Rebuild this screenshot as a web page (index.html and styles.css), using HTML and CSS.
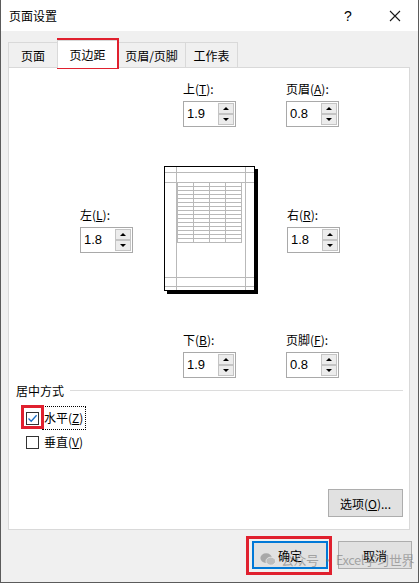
FILE: index.html
```html
<!DOCTYPE html>
<html>
<head>
  <title>页面设置</title>
  <meta charset="UTF-8">
  <link rel="stylesheet" href="styles.css">
</head>
<body>
  <div class="dialog">
    <div class="titlebar">
      <span class="title">页面设置</span>
      <span class="help">?</span>
      <span class="close">
        <svg width="12" height="12" viewBox="0 0 12 12"><path d="M1 1L11 11M11 1L1 11" stroke="#1a1a1a" stroke-width="1.1"/></svg>
      </span>
    </div>

    <div class="body">
      <div class="tabs">
        <div class="tab">页面</div>
        <div class="tab active">页边距</div>
        <div class="tab">页眉/页脚</div>
        <div class="tab">工作表</div>
      </div>

      <div class="panel">
        <div class="margins">
          <div class="field top">
            <label>上(<u>T</u>):</label>
            <div class="spin"><span class="val">1.9</span><div class="arrows"><span class="up"></span><span class="down"></span></div></div>
          </div>
          <div class="field header">
            <label>页眉(<u>A</u>):</label>
            <div class="spin"><span class="val">0.8</span><div class="arrows"><span class="up"></span><span class="down"></span></div></div>
          </div>

          <div class="field left">
            <label>左(<u>L</u>):</label>
            <div class="spin"><span class="val">1.8</span><div class="arrows"><span class="up"></span><span class="down"></span></div></div>
          </div>
          <div class="preview">
            <svg width="94" height="128" viewBox="0 0 94 128">
              <rect x="3" y="3" width="91" height="125" fill="#000"/>
              <rect x="0.5" y="0.5" width="90" height="124" fill="#fff" stroke="#000"/>
              <g stroke="#b9b9b9" stroke-width="1" fill="none">
                <path d="M12.5 1V124M81.5 1V124M1 6.5H90M1 16.5H90M1 111.5H90M1 120.5H90"/>
                <rect x="13.5" y="16.5" width="64" height="60"/>
                <path d="M29.5 16V77M45.5 16V77M61.5 16V77"/>
                <path d="M13 20.5H78M13 24.5H78M13 28.5H78M13 32.5H78M13 36.5H78M13 40.5H78M13 44.5H78M13 48.5H78M13 52.5H78M13 56.5H78M13 60.5H78M13 64.5H78M13 68.5H78M13 72.5H78"/>
              </g>
            </svg>
          </div>
          <div class="field right">
            <label>右(<u>R</u>):</label>
            <div class="spin"><span class="val">1.8</span><div class="arrows"><span class="up"></span><span class="down"></span></div></div>
          </div>

          <div class="field bottom">
            <label>下(<u>B</u>):</label>
            <div class="spin"><span class="val">1.9</span><div class="arrows"><span class="up"></span><span class="down"></span></div></div>
          </div>
          <div class="field footer-field">
            <label>页脚(<u>F</u>):</label>
            <div class="spin"><span class="val">0.8</span><div class="arrows"><span class="up"></span><span class="down"></span></div></div>
          </div>
        </div>

        <div class="group-title"><span>居中方式</span><span class="rule"></span></div>
        <div class="check-row">
          <span class="checkbox checked">
            <svg width="11" height="11" viewBox="0 0 11 11"><path d="M1.5 5.5L4.2 8.2L9.6 2.2" stroke="#1c6fc4" stroke-width="1.3" fill="none"/></svg>
          </span>
          <span class="check-label focus">水平(<u>Z</u>)</span>
        </div>
        <div class="check-row">
          <span class="checkbox"></span>
          <span class="check-label">垂直(<u>V</u>)</span>
        </div>

        <div class="options-row">
          <button class="btn options">选项(<u>O</u>)...</button>
        </div>
      </div>

      <div class="footer">
        <button class="btn default">确定</button>
        <button class="btn">取消</button>
      </div>
    </div>

    <!-- highlight frames -->
    <div class="mark mark-tab"></div>
    <div class="mark mark-check"></div>
    <div class="mark mark-ok"></div>

    <div class="watermark">
      <svg width="16" height="13" viewBox="0 0 17 14">
        <ellipse cx="6.5" cy="5.5" rx="6.2" ry="5.2" fill="#a8a8a8"/>
        <ellipse cx="11.5" cy="8.8" rx="5.2" ry="4.3" fill="#bdbdbd" stroke="#efefef" stroke-width="0.8"/>
      </svg>
      <span>公众号 · Excel学习世界</span>
    </div>
  </div>
</body>
</html>
```

FILE: styles.css
```css
* {
  box-sizing: border-box;
}
body {
  margin: 0;
  font-family: "Noto Sans CJK SC", "Liberation Sans", sans-serif;
  font-size: 12px;
  color: #000;
}
.dialog {
  position: relative;
  width: 419px;
  height: 583px;
  background: #f0f0f0;
  border-left: 1px solid #5b5b5b;
  border-right: 1px solid #5b5b5b;
  border-bottom: 1px solid #5b5b5b;
  display: flex;
  flex-direction: column;
}
.titlebar {
  height: 31px;
  background: #fff;
  display: flex;
  align-items: center;
  padding-left: 8px;
}
.title {
  flex: 1;
  font-size: 12px;
}
.help {
  width: 12px;
  margin-right: 33px;
  font-family: "Liberation Sans", sans-serif;
  font-size: 14px;
}
.close {
  width: 12px;
  height: 12px;
  margin-right: 17px;
  display: flex;
}
.body {
  flex: 1;
  display: flex;
  flex-direction: column;
}
.tabs {
  display: flex;
  height: 26px;
  margin-top: 10px;
  padding-left: 7px;
  align-items: flex-end;
}
.tab {
  height: 25px;
  padding: 0;
  white-space: nowrap;
  border: 1px solid #d9d9d9;
  border-bottom: none;
  border-right: none;
  background: #f0f0f0;
  display: flex;
  align-items: center;
  justify-content: center;
}
.tab:nth-child(1) {
  width: 49px;
}
.tab:nth-child(3) {
  width: 68px;
}
.tab:nth-child(4) {
  width: 53px;
  border-right: 1px solid #d9d9d9;
}
.tab.active {
  width: 60px;
  height: 28px;
  background: #fff;
  margin-bottom: -1px;
  position: relative;
  z-index: 1;
}
.panel {
  height: 463px;
  margin: 0 8px 0 7px;
  background: #fff;
  border: 1px solid #d9d9d9;
  padding: 13px 6px 12px 7px;
  display: flex;
  flex-direction: column;
}
.margins {
  margin-left: 64px;
  display: grid;
  grid-template-columns: 53px 91px 53px;
  column-gap: 31px;
  row-gap: 39px;
}
.field label {
  display: block;
  height: 16px;
  line-height: 16px;
  margin-bottom: 4px;
}
.field.top {
  grid-column: 2;
  grid-row: 1;
  justify-self: center;
}
.field.header {
  grid-column: 3;
  grid-row: 1;
}
.field.left {
  grid-column: 1;
  grid-row: 2;
  align-self: center;
}
.preview {
  grid-column: 2;
  grid-row: 2;
  height: 127px;
}
.preview svg {
  display: block;
}
.field.right {
  grid-column: 3;
  grid-row: 2;
  align-self: center;
  margin-left: 1px;
}
.field.bottom {
  grid-column: 2;
  grid-row: 3;
  justify-self: center;
}
.field.footer-field {
  grid-column: 3;
  grid-row: 3;
}
.spin {
  width: 53px;
  height: 26px;
  border: 1px solid #a9a9a9;
  display: flex;
  background: #fff;
}
.val {
  flex: 1;
  padding-left: 3px;
  line-height: 24px;
  font-family: "Liberation Sans", sans-serif;
  font-size: 13px;
}
.arrows {
  width: 17px;
  display: flex;
  flex-direction: column;
  padding: 1px 1px 1px 0;
}
.arrows span {
  flex: 1;
  border: 1px solid #c4c4c4;
  background: #ececec;
  display: flex;
  align-items: center;
  justify-content: center;
}
.arrows span::after {
  content: "";
  border-left: 3px solid transparent;
  border-right: 3px solid transparent;
}
.arrows .up::after {
  border-bottom: 3px solid #000;
}
.arrows .down::after {
  border-top: 3px solid #000;
}
.group-title {
  display: flex;
  align-items: center;
  height: 16px;
  margin-top: 4px;
}
.group-title .rule {
  flex: 1;
  height: 1px;
  background: #dcdcdc;
  margin-left: 6px;
}
.check-row {
  display: flex;
  align-items: center;
  height: 24px;
  padding-left: 10px;
}
.group-title + .check-row {
  margin-top: 8px;
}
.checkbox {
  width: 13px;
  height: 13px;
  border: 1px solid #333;
  background: #fff;
  display: flex;
  align-items: center;
  justify-content: center;
  margin-right: 3px;
}
.check-label {
  padding: 2px 2px 3px 1px;
  border: 1px solid transparent;
}
.check-label.focus {
  border: 1px dotted #000;
}
.options-row {
  margin-top: auto;
  display: flex;
  justify-content: flex-end;
}
.btn {
  height: 28px;
  border: 1px solid #adadad;
  background: #e1e1e1;
  font-family: "Noto Sans CJK SC", "Liberation Sans", sans-serif;
  font-size: 12px;
  color: #000;
  padding: 0;
}
.btn.options {
  width: 75px;
}
.footer {
  display: flex;
  justify-content: flex-end;
  gap: 10px;
  padding: 11px 6px 0 0;
}
.footer .btn {
  width: 74px;
}
.footer .btn.default {
  width: 76px;
  border: 2px solid #0078d7;
}
.mark {
  position: absolute;
  border: 3px solid #e0202e;
}
.mark-tab {
  left: 56px;
  top: 38px;
  width: 62px;
  height: 31px;
}
.mark-check {
  left: 20px;
  top: 405px;
  width: 23px;
  height: 24px;
}
.mark-ok {
  left: 245px;
  top: 536px;
  width: 86px;
  height: 39px;
}
.watermark {
  position: absolute;
  left: 259px;
  top: 550px;
  display: flex;
  align-items: center;
  gap: 5px;
  color: rgba(120, 120, 120, 0.6);
  font-size: 13px;
  letter-spacing: -0.5px;
  white-space: nowrap;
}
```
